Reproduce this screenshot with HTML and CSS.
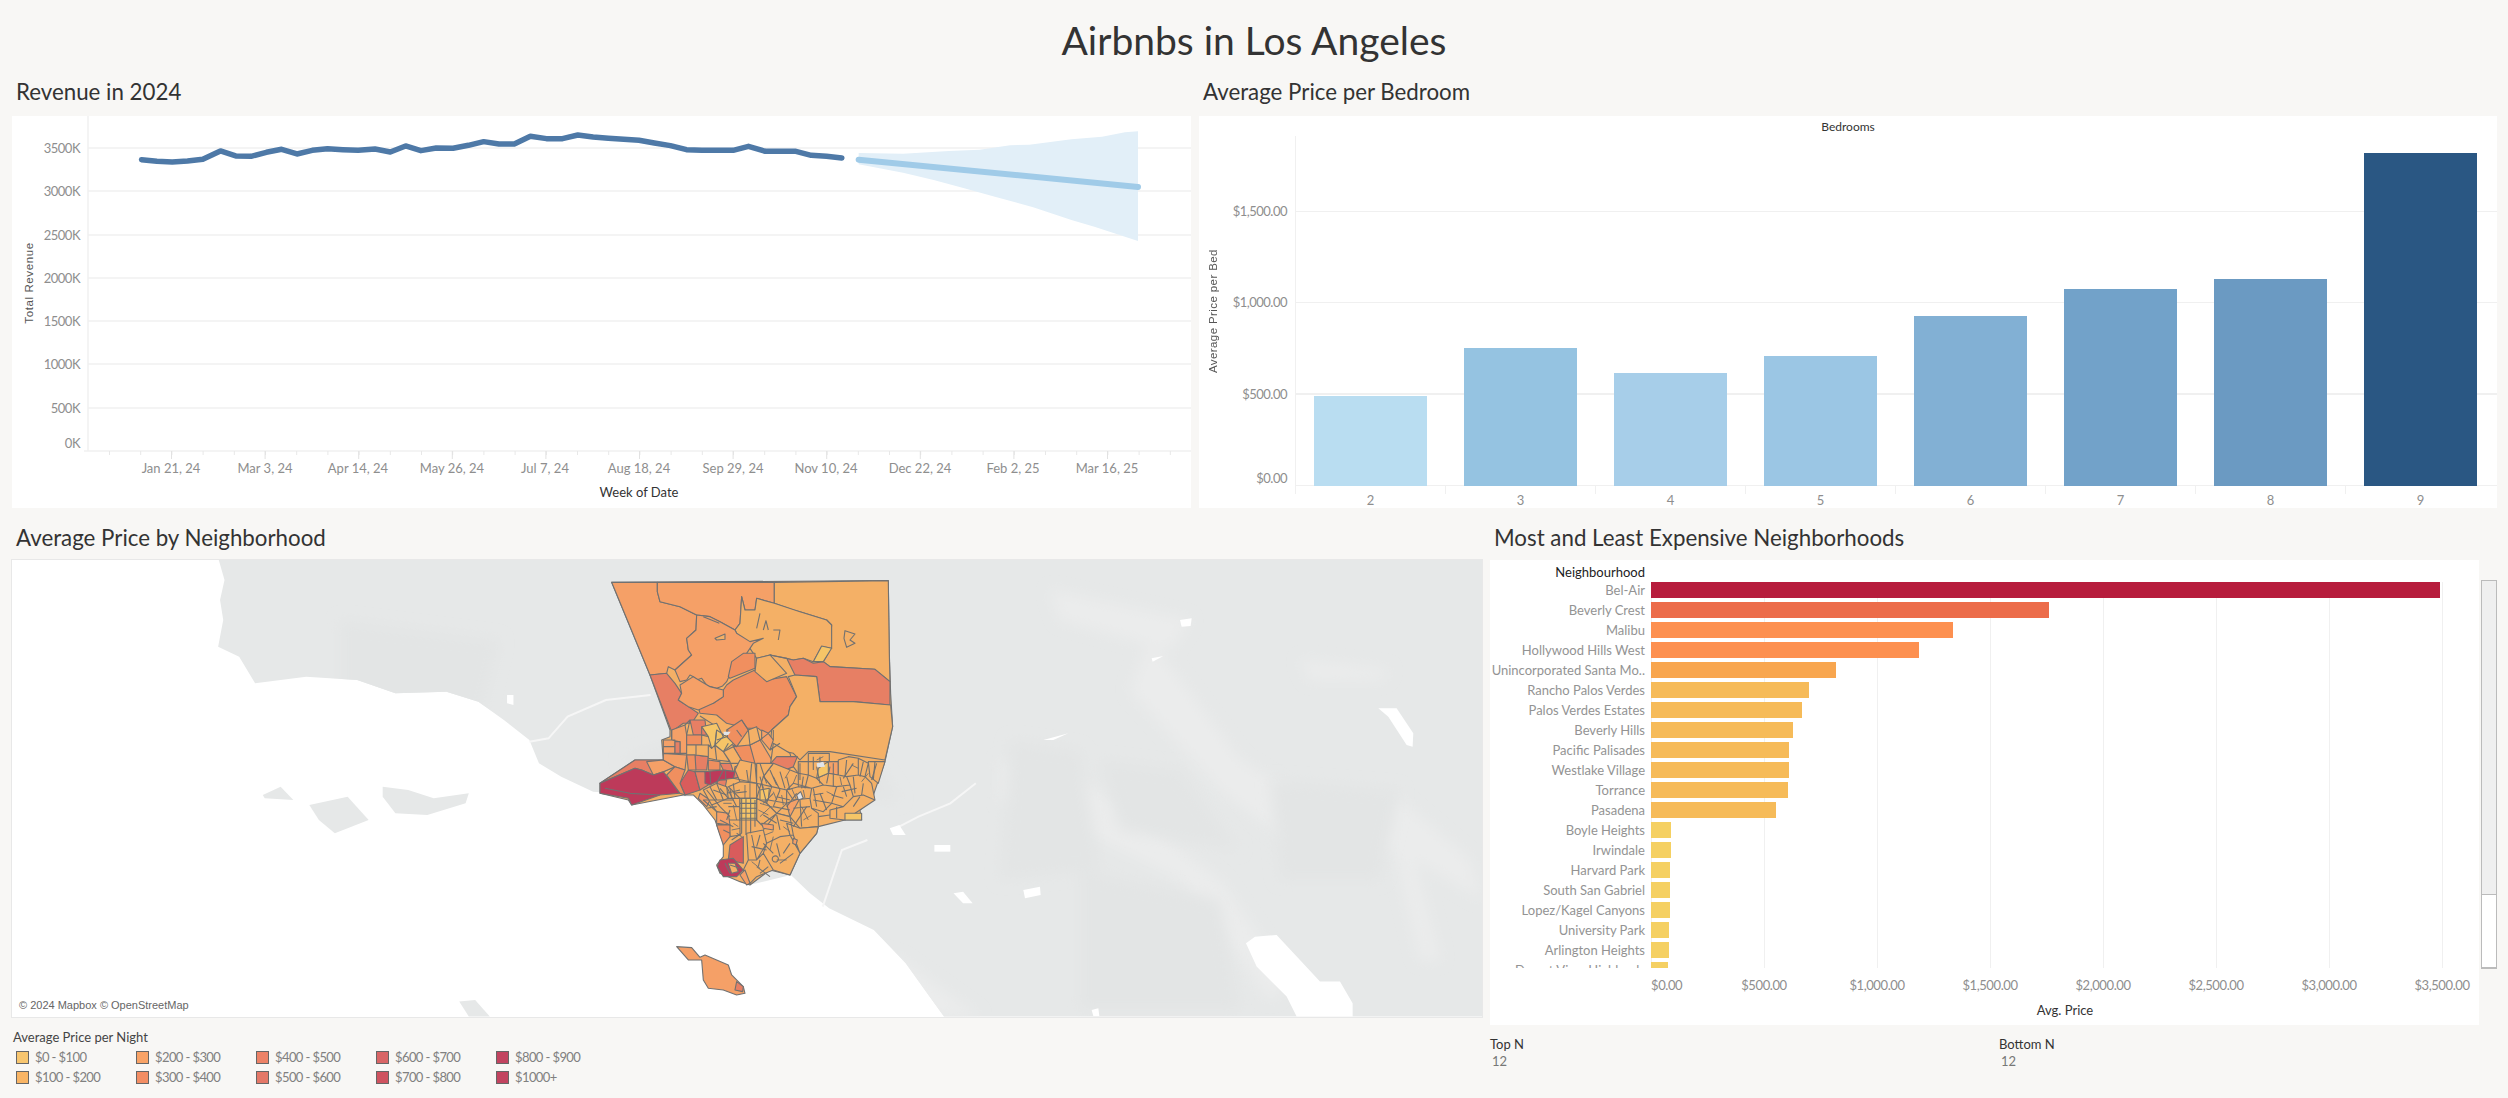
FILE: index.html
```html
<!DOCTYPE html>
<html lang="en">
<head>
<meta charset="utf-8">
<title>Airbnbs in Los Angeles</title>
<link rel="stylesheet" href="styles.css">
</head>
<body>
<header class="page-title">Airbnbs in Los Angeles</header>

<main class="row row-top">
  <section class="col-rev">
    <h2 class="sheet-title sheet-title-top">Revenue in 2024</h2>
    <div class="panel rev-panel">
      <svg class="fill-svg" viewBox="12 116 1179 392" width="1179" height="392">
        <g class="grid">
          <line x1="88" x2="1191" y1="148" y2="148"/><line x1="88" x2="1191" y1="191" y2="191"/><line x1="88" x2="1191" y1="235" y2="235"/><line x1="88" x2="1191" y1="278" y2="278"/><line x1="88" x2="1191" y1="321" y2="321"/><line x1="88" x2="1191" y1="364" y2="364"/><line x1="88" x2="1191" y1="408" y2="408"/><line x1="84" x2="1191" y1="451" y2="451"/><line x1="88" x2="88" y1="116" y2="451"/>
        </g>
        <line class="tick-minor" x1="109" x2="1191" y1="453" y2="453"/>
        <line class="tick-major" x1="171" x2="1191" y1="455" y2="455"/>
        <g transform="scale(0.7653,0.3333)">
          <path class="band" d="M1122,459 L1180,461 1240,453 1280,449 1320,436 1345,434 1400,418 1440,410 1470,397 1487,394 L1487,723 1430,680 1400,660 1350,622 1300,590 1260,565 1220,540 1180,518 1122,493 Z"/>
          <polyline class="rev-line" points="185,479 205,484 225,486 245,483 265,478 288,453 308,468 328,469 348,457 368,448 388,462 408,451 428,446 448,449 468,451 490,447 510,456 530,438 550,452 570,444 592,445 612,436 632,425 652,432 672,432 693,409 714,416 735,416 755,405 775,411 795,415 815,418 835,421 855,429 876,437 897,449 917,451 938,451 958,451 978,439 1000,454 1020,454 1040,454 1060,466 1080,469 1100,474"/>
          <polyline class="fc-line" points="1122,479 1487,561"/>
        </g>
        <g class="ax-y">
          <text x="80" y="153">3500K</text><text x="80" y="196">3000K</text><text x="80" y="240">2500K</text><text x="80" y="283">2000K</text><text x="80" y="326">1500K</text><text x="80" y="369">1000K</text><text x="80" y="413">500K</text><text x="80" y="448">0K</text>
        </g>
        <g class="ax-x">
          <text x="171" y="473">Jan 21, 24</text><text x="265" y="473">Mar 3, 24</text><text x="358" y="473">Apr 14, 24</text><text x="452" y="473">May 26, 24</text><text x="545" y="473">Jul 7, 24</text><text x="639" y="473">Aug 18, 24</text><text x="733" y="473">Sep 29, 24</text><text x="826" y="473">Nov 10, 24</text><text x="920" y="473">Dec 22, 24</text><text x="1013" y="473">Feb 2, 25</text><text x="1107" y="473">Mar 16, 25</text>
        </g>
        <text class="ax-title" x="639" y="497">Week of Date</text>
        <text class="ax-rot" transform="translate(33,283) rotate(-90)">Total Revenue</text>
      </svg>
    </div>
  </section>

  <section class="col-bed">
    <h2 class="sheet-title sheet-title-top">Average Price per Bedroom</h2>
    <div class="panel bed-panel">
      <div class="bed-head">Bedrooms</div>
      <div class="bed-y">
        <span class="bed-rot">Average Price per Bed</span>
        <div class="bed-ticks">
          <div class="bed-tick">$1,500.00</div>
          <div class="bed-tick">$1,000.00</div>
          <div class="bed-tick">$500.00</div>
          <div class="bed-tick bed-tick-zero">$0.00</div>
        </div>
      </div>
      <div class="bed-plot">
        <div class="bed-cell"><div class="bed-bar b2" style="height:90px"></div></div>
        <div class="bed-cell"><div class="bed-bar b3" style="height:138px"></div></div>
        <div class="bed-cell"><div class="bed-bar b4" style="height:113px"></div></div>
        <div class="bed-cell"><div class="bed-bar b5" style="height:130px"></div></div>
        <div class="bed-cell"><div class="bed-bar b6" style="height:170px"></div></div>
        <div class="bed-cell"><div class="bed-bar b7" style="height:197px"></div></div>
        <div class="bed-cell"><div class="bed-bar b8" style="height:207px"></div></div>
        <div class="bed-cell"><div class="bed-bar b9" style="height:333px"></div></div>
      </div>
      <div class="bed-x">
        <div class="bed-lab">2</div><div class="bed-lab">3</div><div class="bed-lab">4</div><div class="bed-lab">5</div><div class="bed-lab">6</div><div class="bed-lab">7</div><div class="bed-lab">8</div><div class="bed-lab">9</div>
      </div>
    </div>
  </section>
</main>

<section class="row row-bottom">
  <div class="col-map">
    <h2 class="sheet-title">Average Price by Neighborhood</h2>
    <div class="map-panel">
      <svg class="fill-svg" viewBox="12 560 1470 457" width="1470" height="457">
        <defs>
          <clipPath id="landclip"><path transform="translate(0,520) scale(0.6378,0.3333)" d="M343,120 L352,180 345,240 350,300 342,380 375,410 400,490 480,470 560,480 620,520 700,515 750,545 790,600 830,660 845,730 880,770 930,815 1000,825 1100,830 1130,900 1140,1000 1125,1050 1175,1095 1240,1065 1270,1120 1300,1165 1370,1230 1420,1330 1480,1490 L2400,1490 2400,120 Z"/></clipPath>
          <filter id="soft" x="-30%" y="-30%" width="160%" height="160%"><feGaussianBlur stdDeviation="7"/></filter>
        </defs>
        <g clip-path="url(#landclip)">
          <rect class="land" x="12" y="560" width="1470" height="457"/>
          <g class="tex-light" filter="url(#soft)">
            <path d="M1150,640 L1240,760 1320,810 1400,800 1470,860 L1482,900 1400,850 1300,850 1220,790 1130,690 Z"/>
            <path d="M1000,760 L1100,790 1220,880 1290,980 1270,1000 1180,880 1080,830 1000,800 Z"/>
            <path d="M1300,660 L1390,670 1380,680 1310,680 Z"/>
            <path d="M1400,800 L1440,960 1420,960 1390,830 Z"/>
            <path d="M370,690 L400,700 395,730 370,715 Z"/>
            <path d="M1050,590 L1190,620 1170,650 1060,620 Z"/>
            <path d="M610,940 L700,900 900,960 980,1017 700,1017 Z"/>
          </g>
          <g class="tex-dark" filter="url(#soft)">
            <path d="M1100,760 L1180,770 1240,850 1120,830 Z"/>
            <path d="M1270,780 L1400,790 1380,880 1280,880 Z"/>
            <path d="M1010,740 L1080,750 1100,870 1000,880 Z"/>
            <path d="M1080,870 L1220,900 1240,1010 1080,1010 Z"/>
            <path d="M340,620 L500,640 480,720 340,700 Z"/>
            <path d="M620,760 L830,690 900,800 760,800 Z"/>
          </g>
        </g>
        <g transform="translate(0,520) scale(0.6378,0.3333)">
          <path class="land" d="M412,825 L440,800 460,840 415,835 Z"/>
          <path class="land" d="M485,855 L545,830 578,900 525,940 500,900 Z"/>
          <path class="land" d="M600,800 L640,810 680,835 735,820 730,850 670,885 620,880 600,830 Z"/>
          <path class="land" d="M720,1445 L745,1440 768,1490 735,1490 Z"/>
          <path class="road" d="M830,665 L860,655 890,590 950,540 1020,525"/>
          <path class="road" d="M1290,1160 L1320,990 1360,960"/>
          <path class="road" d="M1400,930 L1440,890 1490,850 1530,790"/>
          <path class="lake" d="M795,525 L805,525 805,555 795,550 Z"/>
          <path class="lake" d="M1395,925 L1410,915 1420,945 1400,945 Z"/>
          <path class="lake" d="M1465,975 L1490,975 1490,995 1465,995 Z"/>
          <path class="lake" d="M1495,1120 L1510,1115 1525,1150 1510,1150 Z"/>
        </g>
        <g transform="translate(1000,520) scale(0.3333)">
          <path class="lake" d="M738,1270 L765,1250 830,1245 900,1320 960,1385 1020,1385 1058,1450 1058,1490 890,1490 860,1430 770,1340 Z"/>
          <path class="lake" d="M1135,565 L1190,565 1240,640 1238,680 1220,675 1165,590 Z"/>
          <path class="lake" d="M130,660 L205,640 160,660 Z"/>
          <path class="lake" d="M540,300 L575,295 572,318 545,320 Z"/>
          <path class="lake" d="M70,1110 L120,1100 122,1125 75,1135 Z"/>
          <path class="lake" d="M455,415 L490,408 458,425 Z"/>
          <path class="lake" d="M275,1470 L295,1465 298,1488 280,1488 Z"/>
        </g>
        <!-- county, drawn in the 3x crop space of the county -->
        <g transform="translate(560,560) scale(0.3333)" class="county">
          <path class="c2" d="M155,67 L985,62 988,280 992,400 998,500 975,605 935,720 900,750 905,780 855,780 775,800 770,820 720,880 690,945 630,930 570,975 540,965 480,940 470,915 490,890 490,850 465,780 430,735 400,705 370,705 215,735 205,720 120,700 120,670 225,600 310,600 305,540 330,530 330,510 270,345 Z"/>
          <path class="c3" d="M155,67 L292,67 292,95 300,125 360,140 410,165 408,210 380,235 385,270 395,285 345,330 325,320 320,340 270,345 Z"/>
          <path class="c3" d="M292,67 L643,67 643,130 590,115 585,150 555,150 545,110 540,190 525,210 480,185 450,170 410,165 360,140 300,125 292,95 Z"/>
          <path class="c2" d="M643,67 L985,62 988,280 990,365 945,328 810,320 790,305 810,270 815,195 800,180 720,155 700,150 643,130 Z"/>
          <path class="c2" d="M590,115 L643,130 720,155 800,180 815,195 815,265 785,260 760,305 730,295 700,300 680,295 630,285 590,295 570,265 530,220 525,210 540,190 545,110 555,150 585,150 Z"/>
          <path class="c3" d="M410,165 L450,170 480,185 525,210 530,220 570,245 610,235 580,250 570,265 560,280 520,320 500,365 488,378 470,385 450,380 440,375 425,355 410,360 400,350 390,345 380,360 360,365 345,330 395,285 385,270 380,235 408,210 Z"/>
          <path class="c4" d="M550,280 L585,280 585,325 510,355 505,350 515,305 Z"/>
          <path class="c4" d="M585,330 L620,360 680,350 710,410 690,440 685,465 635,510 620,525 595,505 560,505 500,490 470,465 420,460 415,440 460,430 490,410 490,390 500,375 520,360 Z"/>
          <path class="c5" d="M630,285 L680,295 705,345 770,350 780,425 880,425 990,435 990,365 945,328 810,320 790,305 760,310 730,295 700,300 Z"/>
          <path class="c2" d="M590,295 L630,285 680,340 620,365 585,335 Z"/>
          <path class="c5" d="M270,345 L320,340 345,370 365,400 355,420 385,440 415,460 395,490 370,490 335,515 Z"/>
          <path class="c3" d="M360,375 L400,350 450,380 490,390 490,410 460,430 415,450 385,440 355,420 365,400 Z"/>
          <path class="c2" d="M685,350 L710,410 690,440 685,465 635,510 630,565 700,580 720,600 745,575 810,575 975,600 998,500 992,435 880,425 780,425 770,350 705,345 Z"/>
          <path class="c1" d="M785,258 L815,265 790,305 760,305 Z"/>
          <path class="c2" d="M855,212 L885,222 870,240 885,250 860,262 852,235 Z"/>
          <path class="c2" d="M465,235 L495,222 495,238 470,240 Z"/>
          <path class="edge" d="M610,210 L618,182 625,210 M640,210 L660,210 655,240 M430,170 L478,190 M420,468 L470,500 M600,160 L590,205"/>
        </g>
        <g transform="translate(560,720) scale(0.3333)" class="county">
          <path class="c5" d="M120,190 L225,120 310,120 345,140 310,155 280,165 245,150 225,145 Z"/>
          <path class="c3" d="M260,125 L310,120 345,140 310,155 280,165 Z"/>
          <path class="c7" d="M120,190 L225,145 245,150 280,165 310,155 360,220 300,225 215,255 205,235 120,220 Z"/>
          <path class="edge" d="M135,205 L210,220 300,225"/>
          <!-- valley -->
          <path class="c3" d="M310,60 L345,60 345,100 310,100 Z M335,30 L375,15 380,45 380,100 360,100 360,65 335,60 Z M310,100 L380,105 375,150 345,140 310,120 Z"/>
          <path class="c5" d="M345,65 L360,65 360,100 345,100 Z M390,0 L435,0 440,45 400,45 Z M405,105 L445,110 440,150 405,150 Z M480,130 L512,130 520,155 490,150 Z"/>
          <path class="c4" d="M380,45 L425,45 425,75 380,75 Z M445,120 L480,125 480,150 445,150 Z M500,30 L545,0 565,30 530,80 505,70 Z M520,80 L570,75 590,130 550,130 Z"/>
          <path class="c2" d="M380,75 L408,75 408,105 380,105 Z M408,75 L445,75 445,110 408,105 Z M465,75 L490,95 510,125 470,120 Z M445,75 L465,80 470,120 445,115 Z M490,95 L520,80 550,130 512,130 Z"/>
          <path class="c1" d="M425,20 L470,10 490,50 455,85 445,50 Z M470,30 L500,50 520,70 490,95 465,75 Z"/>
          <path class="c3" d="M570,75 L600,60 630,110 640,130 600,155 585,130 Z M605,30 L625,40 640,60 630,90 605,60 Z"/>
          <path class="c2" d="M565,30 L590,20 600,60 570,75 Z M640,70 L690,100 700,140 660,155 632,130 Z"/>
          <path class="c6" d="M360,190 L385,150 405,155 420,210 375,225 Z"/>
          <path class="c4" d="M345,140 L375,150 360,190 375,225 360,220 320,165 Z M405,105 L408,150 385,150 380,105 Z"/>
          <path class="c5" d="M405,155 L435,155 445,195 420,210 Z M525,140 L550,130 548,170 520,175 Z M470,180 L500,180 495,205 475,210 Z"/>
          <path class="c5" d="M650,110 L712,110 700,140 660,155 632,130 Z"/>
          <path class="c7" d="M435,155 L490,150 525,155 520,175 480,180 450,195 435,190 Z"/>
          <path class="edge" d="M450,155 L452,190 M490,150 L470,190 M497,152 L497,178"/>
          <path class="c3" d="M420,220 L450,240 440,260 415,235 Z M470,275 L505,275 505,310 475,315 Z M805,125 L835,125 835,165 805,160 Z"/>
          <!-- east / south-east -->
          <path class="c2" d="M745,100 L808,100 808,125 745,125 Z M715,125 L745,125 745,165 715,160 Z M745,125 L805,125 805,160 770,175 745,165 Z M835,120 L865,110 895,115 895,165 860,170 835,165 Z M895,115 L925,130 915,170 895,165 Z M925,125 L975,125 955,190 930,170 Z M860,170 L895,165 915,170 935,190 945,240 910,225 880,230 870,195 Z M770,175 L805,160 835,165 860,170 870,195 830,200 790,195 Z M715,160 L745,165 770,175 790,195 755,205 715,200 Z M755,205 L790,195 830,200 815,250 790,275 755,265 750,235 Z M830,200 L870,195 880,230 850,260 815,250 Z M850,260 L880,230 910,225 945,240 900,270 855,300 810,295 810,270 Z M700,190 L755,205 750,235 700,240 680,210 Z M700,240 L750,235 755,265 775,280 775,320 720,325 690,290 Z M635,200 L680,210 700,240 690,290 650,280 620,250 Z M640,130 L715,160 715,200 680,210 635,200 610,170 Z"/>
          <path class="c1" d="M775,145 L805,125 805,160 770,175 Z M855,280 L905,280 905,300 855,300 Z"/>
          <!-- central -->
          <path class="c2" d="M430,210 L470,190 500,200 505,235 455,255 Z M455,255 L505,235 540,235 540,300 500,300 470,275 Z M505,200 L540,185 590,190 590,235 540,235 Z M590,235 L620,250 650,280 605,315 590,300 Z M505,300 L540,300 540,345 510,350 Z M560,340 L610,330 620,370 590,420 565,420 Z M610,330 L650,280 690,290 700,345 660,350 620,370 Z M620,370 L660,350 700,345 720,400 690,465 640,450 610,400 Z M590,420 L610,400 640,450 590,470 570,490 550,450 565,420 Z M680,310 L720,325 775,320 770,340 720,400 690,345 Z M540,120 L585,130 590,190 540,185 525,150 Z M590,130 L640,130 610,170 635,200 590,190 Z"/>
          <path class="c1" d="M600,210 L628,205 625,240 600,240 Z M540,235 L590,235 590,300 540,300 Z"/>
          <path class="c3" d="M470,275 L505,280 510,315 470,310 Z M680,250 L720,235 690,290 Z M605,310 L640,315 640,330 610,325 Z"/>
          <path class="c4" d="M470,315 L510,315 510,350 490,375 478,340 Z"/>
          <path class="c6" d="M510,375 L550,350 550,430 505,420 Z"/>
          <path class="c7" d="M480,420 L520,415 550,450 530,470 490,470 472,440 Z"/>
          <path class="c2" d="M505,430 L525,430 535,455 515,460 Z"/>
          <path class="c3" d="M540,465 L555,450 570,490 560,495 Z M700,355 L712,360 708,375 698,370 Z"/>
          <path class="edge" d="M545,235 L545,340 M558,235 L558,345 M572,235 L572,340 M585,240 L585,320 M540,250 L590,250 M540,265 L590,265 M540,280 L590,280 M540,295 L590,295 M500,200 L530,260 M505,235 L480,205 M440,210 L480,260 M430,240 L470,275 M610,170 L590,235 M630,150 L650,195 M660,155 L675,205 M700,140 L715,160 M520,175 L590,190 M540,210 L500,220 M590,190 L600,210 M625,240 L680,250 M650,280 L680,250 M680,210 L680,250 M760,240 L815,250 M800,190 L810,140 M850,175 L880,130 M900,170 L910,125 M940,180 L945,125 M710,220 L680,260 M740,260 L700,320 M650,285 L660,330 M620,250 L605,190 M780,220 L800,270 M845,215 L890,205 M760,150 L760,110 M720,130 L720,180 M660,210 L640,260 M575,345 L590,420 M530,340 L545,350 M610,370 L640,400 M640,410 a8,8 0 1 0 12,14 a8,8 0 1 0 -12,-14 M510,435 L540,445 M495,430 L510,460 M590,440 L630,470 M600,460 L625,440"/>
          <path class="edge" d="M335,30 L335,60 M375,15 L390,0 M310,80 L345,80 M380,45 L390,0 M425,45 L425,20 M445,50 L425,45 M455,85 L445,75 M470,60 L500,50 M465,75 L470,30 M490,50 L505,30 M505,70 L490,95 M530,80 L520,70 M545,50 L530,30 M565,30 L545,0 M600,60 L625,40 M630,90 L660,70 M640,60 L640,30 M430,240 L520,240 M450,200 L470,240 M470,190 L490,240 M520,190 L525,235 M505,260 L540,260 M480,260 L510,290 M500,300 L510,270 M600,130 L620,190 M640,170 L660,210 M610,250 L640,220 M680,170 L690,210 M730,170 L725,205 M745,165 L735,205 M780,190 L770,140 M820,130 L820,200 M860,120 L855,170 M880,170 L885,220 M910,190 L905,225 M950,130 L935,180 M780,110 L780,130 M760,205 L770,260 M790,220 L760,225 M815,225 L850,235 M860,230 L850,200 M880,260 L900,230 M830,260 L830,295 M775,290 L810,285 M700,265 L750,260 M720,240 L725,320 M650,230 L690,240 M640,260 L690,270 M610,285 L650,310 M600,345 L590,380 M575,380 L620,390 M650,370 L660,410 M690,370 L670,400 M700,400 L660,430 M595,440 L600,420 M660,300 L700,310 M490,330 L510,340 M515,360 L545,340 M520,220 L560,215 M610,205 L600,170 M560,150 L565,185 M575,130 L570,185 M460,210 L500,225 M440,265 L470,260 M480,300 L520,320"/>
          <path class="edge thin" d="M600,250 L640,262 M595,270 L625,285 M600,290 L630,262 M520,255 L530,300 M490,250 L515,250 M510,205 L515,235 M555,195 L555,235 M570,190 L570,235 M640,215 L650,240 M665,225 L670,255 M695,205 L710,240 M730,210 L735,235 M710,165 L700,190 M690,150 L675,175 M615,345 L640,335 M640,350 L630,390 M670,320 L690,335 M575,425 L600,445 M650,420 L680,420 M520,310 L535,320 M515,330 L540,325 M800,215 L820,225 M840,170 L845,195 M875,135 L895,145 M925,160 L905,185 M770,120 L790,110 M725,260 L745,300 M755,285 L730,300"/>
          <path class="water" d="M710,225 L722,215 730,235 715,240 Z"/>
          <!-- Catalina -->
          <path class="c3" d="M350,680 L395,683 420,712 435,705 505,735 515,765 550,800 555,820 530,825 490,810 445,805 430,780 425,720 385,720 Z"/>
          <path class="c5" d="M530,785 L550,800 548,815 525,810 Z"/>
        </g>
        <g transform="translate(560,560) scale(0.3333)">
          <path class="water" d="M490,515 L512,515 505,525 492,525 Z M770,610 L790,605 795,620 772,622 Z"/>
        </g>
      </svg>
      <div class="map-credit">© 2024 Mapbox © OpenStreetMap</div>
    </div>
    <div class="legend">
      <div class="legend-title">Average Price per Night</div>
      <div class="legend-grid">
        <div class="leg"><i class="sw s1"></i>$0 - $100</div>
        <div class="leg"><i class="sw s2"></i>$100 - $200</div>
        <div class="leg"><i class="sw s3"></i>$200 - $300</div>
        <div class="leg"><i class="sw s4"></i>$300 - $400</div>
        <div class="leg"><i class="sw s5"></i>$400 - $500</div>
        <div class="leg"><i class="sw s6"></i>$500 - $600</div>
        <div class="leg"><i class="sw s7"></i>$600 - $700</div>
        <div class="leg"><i class="sw s8"></i>$700 - $800</div>
        <div class="leg"><i class="sw s9"></i>$800 - $900</div>
        <div class="leg"><i class="sw s9"></i>$1000+</div>
      </div>
    </div>
  </div>

  <div class="col-hood">
    <h2 class="sheet-title">Most and Least Expensive Neighborhoods</h2>
    <div class="hood-wrap">
      <div class="panel hood-panel">
        <div class="hood-head">Neighbourhood</div>
        <div class="hood-body">
          <div class="hood-labels">
            <div>Bel-Air</div><div>Beverly Crest</div><div>Malibu</div><div>Hollywood Hills West</div><div>Unincorporated Santa Mo..</div><div>Rancho Palos Verdes</div><div>Palos Verdes Estates</div><div>Beverly Hills</div><div>Pacific Palisades</div><div>Westlake Village</div><div>Torrance</div><div>Pasadena</div><div>Boyle Heights</div><div>Irwindale</div><div>Harvard Park</div><div>South San Gabriel</div><div>Lopez/Kagel Canyons</div><div>University Park</div><div>Arlington Heights</div><div>Desert View Highlands</div>
          </div>
          <div class="hood-plot">
            <div class="hbar h1" style="width:789px"></div>
            <div class="hbar h2" style="width:398px"></div>
            <div class="hbar h3" style="width:302px"></div>
            <div class="hbar h3" style="width:268px"></div>
            <div class="hbar h4" style="width:185px"></div>
            <div class="hbar h5" style="width:158px"></div>
            <div class="hbar h5" style="width:151px"></div>
            <div class="hbar h5" style="width:142px"></div>
            <div class="hbar h5" style="width:138px"></div>
            <div class="hbar h5" style="width:138px"></div>
            <div class="hbar h5" style="width:137px"></div>
            <div class="hbar h5" style="width:125px"></div>
            <div class="hbar h6" style="width:20px"></div>
            <div class="hbar h6" style="width:20px"></div>
            <div class="hbar h6" style="width:19px"></div>
            <div class="hbar h6" style="width:19px"></div>
            <div class="hbar h6" style="width:19px"></div>
            <div class="hbar h6" style="width:18px"></div>
            <div class="hbar h6" style="width:18px"></div>
            <div class="hbar h6" style="width:17px"></div>
          </div>
        </div>
        <div class="hood-axis">
          <div class="hood-tick hood-tick-first">$0.00</div>
          <div class="hood-tick">$500.00</div>
          <div class="hood-tick">$1,000.00</div>
          <div class="hood-tick">$1,500.00</div>
          <div class="hood-tick">$2,000.00</div>
          <div class="hood-tick">$2,500.00</div>
          <div class="hood-tick">$3,000.00</div>
          <div class="hood-tick">$3,500.00</div>
        </div>
        <div class="hood-title">Avg. Price</div>
      </div>
      <div class="scrollbar"><div class="thumb"></div></div>
    </div>
    <div class="params">
      <div class="param"><div class="param-name">Top N</div><div class="param-val">12</div></div>
      <div class="param"><div class="param-name">Bottom N</div><div class="param-val">12</div></div>
    </div>
  </div>
</section>
</body>
</html>
```

FILE: styles.css
```css
* { box-sizing: border-box; }
html, body { margin: 0; padding: 0; }
body {
  width: 2508px;
  height: 1098px;
  overflow: hidden;
  background: #f8f7f5;
  color: #333;
  font-family: Lato, "Open Sans", sans-serif;
}
.page-title {
  height: 80px;
  text-align: center;
  font-size: 39px;
  line-height: 80px;
  color: #333;
}
.row { display: flex; padding-left: 12px; column-gap: 8px; }
.row-top { height: 440px; }
.col-rev { width: 1179px; }
.col-bed { width: 1298px; }
.col-map { width: 1470px; }
.col-hood { width: 1007px; }
.sheet-title {
  margin: 0;
  height: 40px;
  padding-left: 4px;
  font-weight: 400;
  font-size: 22.3px;
  line-height: 36px;
  color: #333;
}
.sheet-title-top { height: 36px; line-height: 24px; }
.panel { background: #fff; }
.fill-svg { display: block; }

/* line chart */
.rev-panel { height: 392px; }
.grid line { stroke: #f0f0f0; stroke-width: 1.5; }
.tick-minor { stroke: #e8e8e8; stroke-width: 4; stroke-dasharray: 1 30.2; }
.tick-major { stroke: #e2e2e2; stroke-width: 8; stroke-dasharray: 1 92.6; }
.band { fill: #e2eff8; }
.rev-line { fill: none; stroke: #4e79a7; stroke-width: 5.5px; stroke-linejoin: round; stroke-linecap: round; vector-effect: non-scaling-stroke; }
.fc-line { fill: none; stroke: #a0cbe8; stroke-width: 6px; stroke-linecap: round; vector-effect: non-scaling-stroke; }
.ax-y text { text-anchor: end; font-size: 13px; letter-spacing: -.5px; fill: #8e8e8e; }
.ax-x text { text-anchor: middle; font-size: 13px; fill: #8e8e8e; }
.ax-title { text-anchor: middle; font-size: 13px; fill: #333; }
.ax-rot { text-anchor: middle; font-family: "Liberation Sans", sans-serif; font-size: 11.5px; letter-spacing: .6px; fill: #555; }

/* vertical bars */
.bed-panel {
  height: 392px;
  display: grid;
  grid-template-columns: 96px 1202px;
  grid-template-rows: 20px 350px 22px;
}
.bed-head { grid-column: 1 / 3; text-align: center; font-size: 12px; line-height: 22px; color: #333; }
.bed-y { display: flex; }
.bed-rot {
  writing-mode: vertical-rl;
  transform: rotate(180deg);
  width: 22px;
  margin-left: 8px;
  text-align: center;
  font-family: "Liberation Sans", sans-serif;
  font-size: 11.5px;
  letter-spacing: .4px;
  color: #555;
  height: 350px;
}
.bed-ticks { flex: 1; padding-top: 30px; padding-right: 8px; text-align: right; font-size: 13px; letter-spacing: -.5px; color: #8e8e8e; }
.bed-tick { height: 91.3px; line-height: 91.3px; }
.bed-tick-zero { height: 76px; line-height: 76px; }
.bed-plot {
  display: flex;
  height: 350px;
  padding-right: 2px;
  border-left: 1px solid #f0f0f0;
  background: repeating-linear-gradient(to top, #f0f0f0 0 1.5px, transparent 1.5px 91.3px);
}
.bed-cell { width: 150px; display: flex; align-items: flex-end; justify-content: center; }
.bed-bar { width: 113px; }
.b2 { background: #b9ddf1; }
.b3 { background: #95c3e1; }
.b4 { background: #a7cee9; }
.b5 { background: #9bc6e4; }
.b6 { background: #82b0d4; }
.b7 { background: #72a2c9; }
.b8 { background: #6b9ac2; }
.b9 { background: #2a5783; }
.bed-x { grid-column: 2; display: flex; }
.bed-lab { width: 150px; text-align: center; font-size: 13px; line-height: 28px; color: #8e8e8e; border-left: 1px solid #f0f0f0; height: 8px; overflow: visible; }

/* map */
.map-panel { position: relative; height: 457px; background: #fff; outline: 1px solid #e8e8e8; }
.land { fill: #e6e8e8; }
.tex-light path { fill: #ebecec; }
.tex-dark path { fill: #e3e5e5; }
.road { fill: none; stroke: #f6f6f6; stroke-width: 2px; vector-effect: non-scaling-stroke; }
.lake { fill: #fff; }
.water { fill: #dfe4ea; stroke: none; }
.county path { stroke: #717171; stroke-width: 1.1px; stroke-linejoin: round; vector-effect: non-scaling-stroke; }
.county .edge { fill: none; }
.county .thin { stroke-width: .9px; }
.c1 { fill: #f6c567; }
.c2 { fill: #f4b066; }
.c3 { fill: #f5a067; }
.c4 { fill: #f08f5f; }
.c5 { fill: #e77f64; }
.c6 { fill: #d95c5c; }
.c7 { fill: #bd3a5a; }
.map-credit {
  position: absolute;
  left: 3px;
  bottom: 4px;
  padding: 0 4px;
  font-family: "Liberation Sans", sans-serif;
  font-size: 11px;
  line-height: 15px;
  color: #666;
  background: rgba(255,255,255,.6);
  white-space: nowrap;
}
.legend { padding: 12px 0 0 1px; }
.legend-title { font-size: 13px; line-height: 16px; color: #444; }
.legend-grid {
  display: grid;
  grid-template-rows: 20px 20px;
  grid-auto-flow: column;
  grid-auto-columns: 120px;
  padding: 2px 0 0 3px;
}
.leg { display: flex; align-items: center; font-size: 13px; letter-spacing: -.6px; color: #808080; white-space: nowrap; }
.sw { display: block; width: 13px; height: 13px; margin-right: 6px; border: 1px solid #666; }
.s1 { background: #f8c66f; }
.s2 { background: #f9b565; }
.s3 { background: #f9a367; }
.s4 { background: #f38e64; }
.s5 { background: #ed8267; }
.s6 { background: #e47868; }
.s7 { background: #d96566; }
.s8 { background: #cf5360; }
.s9 { background: #c24460; }

/* horizontal bars */
.hood-wrap { display: flex; column-gap: 2px; }
.hood-panel { width: 989px; height: 465px; }
.hood-head { height: 22px; width: 155px; text-align: right; font-size: 13px; line-height: 24px; color: #222; }
.hood-body { display: flex; height: 386px; overflow: hidden; }
.hood-labels { width: 161px; flex: none; padding-right: 6px; text-align: right; font-size: 13px; color: #939393; white-space: nowrap; }
.hood-labels div { height: 20px; line-height: 17px; }
.hood-plot {
  flex: 1;
  background: repeating-linear-gradient(to right, #f0f0f0 0 1px, transparent 1px 113px);
}
.hbar { height: 16px; margin-bottom: 4px; }
.h1 { background: #b71d3d; }
.h2 { background: #ec6c4a; }
.h3 { background: #fd9050; }
.h4 { background: #f8a64f; }
.h5 { background: #f6bb59; }
.h6 { background: #f5d062; }
.hood-axis { display: flex; padding-left: 161px; height: 34px; font-size: 13px; letter-spacing: -.4px; line-height: 34px; color: #8e8e8e; }
.hood-tick { flex: none; width: 113px; text-align: center; white-space: nowrap; }
.hood-tick-first { width: 56.5px; text-align: left; }
.hood-title { padding-left: 161px; text-align: center; font-size: 13px; line-height: 16px; color: #333; }
.scrollbar { width: 16px; height: 389px; margin-top: 20px; border: 1px solid #bbb; border-bottom-width: 2px; background: #fff; }
.thumb { height: 314px; background: #efefef; border-bottom: 1px solid #bbb; }
.params { display: flex; padding-top: 11px; font-size: 13px; line-height: 17px; }
.param { width: 509px; flex: none; }
.param-name { color: #333; }
.param-val { padding: 0 0 0 2px; margin-top: 0; color: #777; }
```
